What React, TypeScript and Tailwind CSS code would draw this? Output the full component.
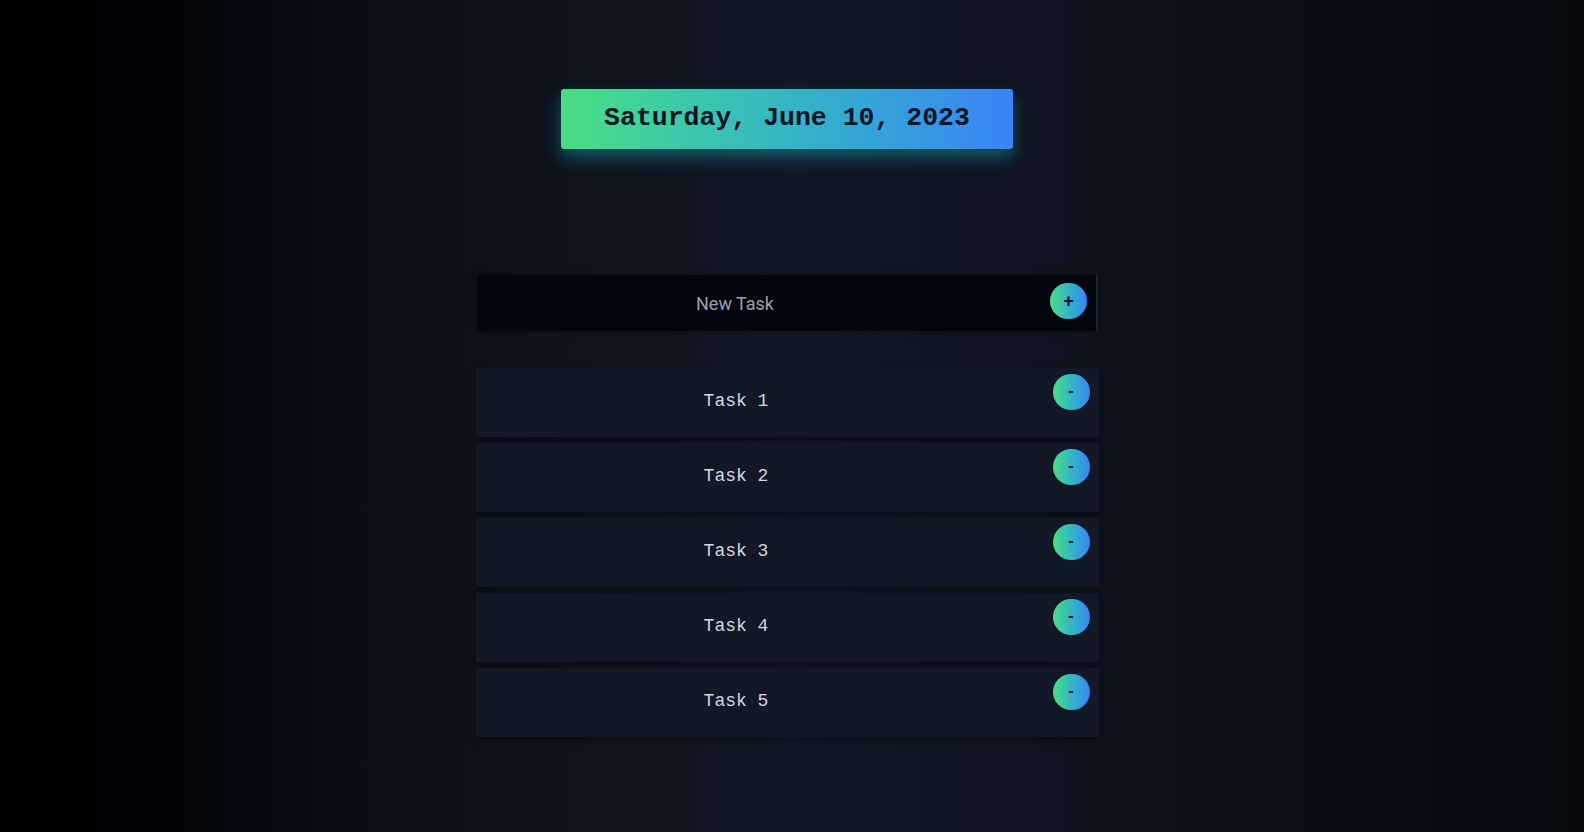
import { useState } from "react";

interface Task {
  id: number;
  title: string;
}

const App = () => {
  const [tasks, setTasks] = useState<Task[]>([
    { id: 1, title: "Task 1" },
    { id: 2, title: "Task 2" },
    { id: 3, title: "Task 3" },
    { id: 4, title: "Task 4" },
    { id: 5, title: "Task 5" },
  ]);
  const [newTask, setNewTask] = useState("");

  const handleAdd = () => {
    if (!newTask.trim()) return;
    setTasks([...tasks, { id: Date.now(), title: newTask }]);
    setNewTask("");
  };

  const handleRemove = (id: number) => {
    setTasks(tasks.filter((t) => t.id !== id));
  };

  return (
    <div className="min-h-screen w-full bg-[linear-gradient(to_right,#000000_0%,#020308_10%,#0a0e18_22%,#10151f_40%,#121826_50%,#0f1420_65%,#0b0f18_80%,#07090f_100%)]">
      <div className="mr-[10px] flex flex-col items-center pt-[89px] pb-20">
        <div className="flex h-[60px] w-[452px] items-center justify-center rounded-[3px] bg-gradient-to-r from-[#4ade80] to-[#3b82f6] shadow-[0_9px_16px_rgba(20,184,200,0.4)]">
          <span className="font-['Liberation_Mono',monospace] text-[26.5px] font-bold text-[#0b1424]">
            Saturday, June 10, 2023
          </span>
        </div>

        <div className="mt-[126px] ml-[2px] flex h-[56px] w-[620px] items-start border-r-2 border-[#1c2230] bg-[#03060d] shadow-[0_0_6px_rgba(0,0,0,0.4)]">
          <input
            type="text"
            value={newTask}
            onChange={(e) => setNewTask(e.target.value)}
            placeholder="New Task"
            className="h-full w-[514px] bg-transparent text-center font-['Roboto',sans-serif] text-[18px] text-[#c7ccd6] outline-none placeholder:text-[#9aa1ad]"
          />
          <button
            type="button"
            onClick={handleAdd}
            className="ml-[58px] mt-[8px] flex h-[36px] w-[37px] items-center justify-center rounded-full bg-gradient-to-r from-[#4ade80] to-[#3b82f6] font-['Liberation_Sans',sans-serif] text-[18px] font-bold text-[#0b1424]"
          >
            +
          </button>
        </div>

        <ul className="mt-[37px] flex w-[623px] flex-col gap-[6px]">
          {tasks.map((task) => (
            <li
              key={task.id}
              className="flex h-[69px] items-start bg-[#121826] shadow-[0_3px_6px_rgba(0,0,0,0.4)]"
            >
              <span className="mt-[20px] w-[521px] text-center font-['Liberation_Mono',monospace] text-[18px] text-[#d4d8e0]">
                {task.title}
              </span>
              <button
                type="button"
                onClick={() => handleRemove(task.id)}
                className="ml-[56px] mt-[6px] flex h-[36px] w-[37px] items-center justify-center rounded-full bg-gradient-to-r from-[#4ade80] to-[#3b82f6] pb-[3px] font-['Liberation_Sans',sans-serif] text-[16px] font-bold text-[#0b1424]"
              >
                -
              </button>
            </li>
          ))}
        </ul>
      </div>
    </div>
  );
};

export default App;
